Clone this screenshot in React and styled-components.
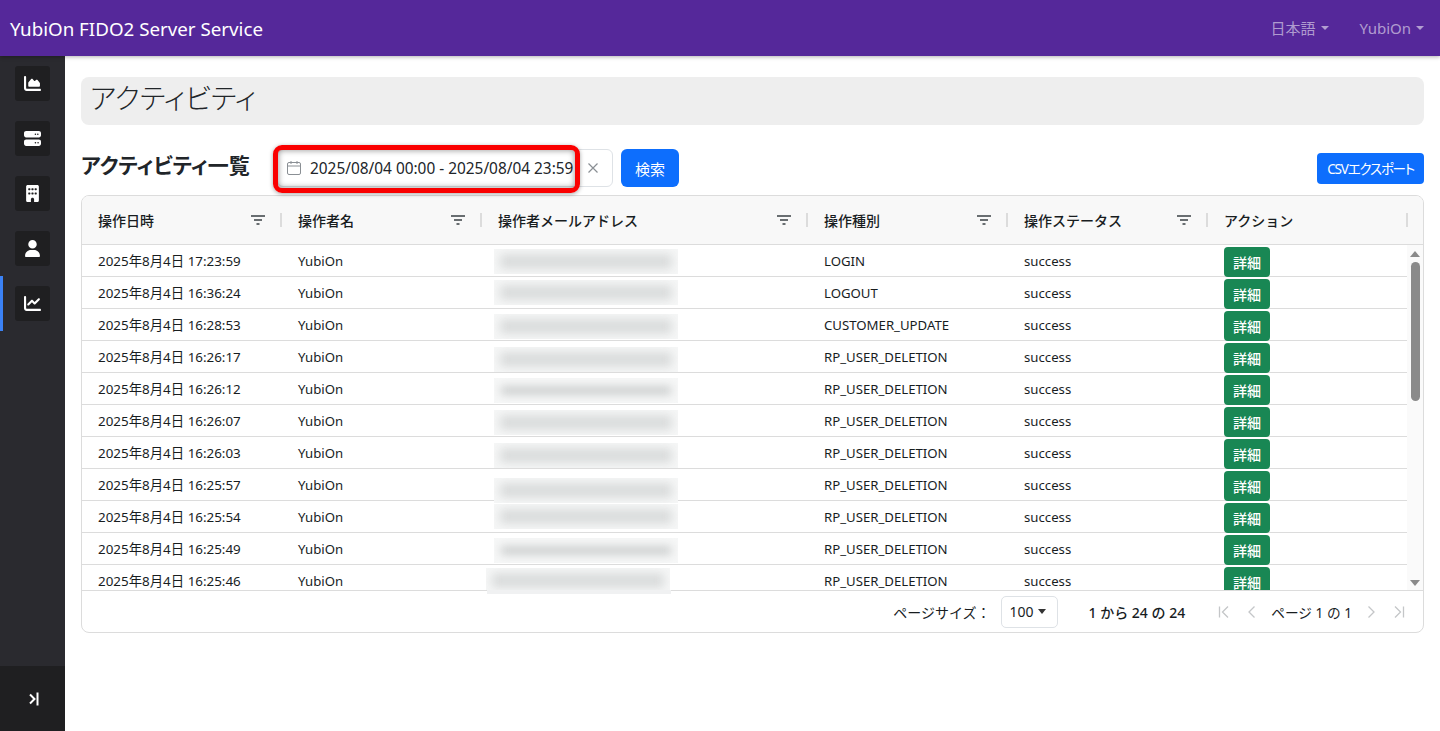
import React from "react";
import styled, { createGlobalStyle } from "styled-components";
import { FaChartArea, FaServer, FaBuilding, FaUser, FaChartLine } from "react-icons/fa6";

const GlobalStyle = createGlobalStyle`
  html, body {
    margin: 0;
    height: 100%;
    overflow: hidden;
    background: #fff;
  }
  * {
    box-sizing: border-box;
  }
  body {
    font-family: "Noto Sans", "Noto Sans CJK JP", sans-serif;
    font-size: 13px;
    color: #212529;
  }
`;

const Page = styled.div`
  display: flex;
  flex-direction: column;
  height: 731px;
`;

const Navbar = styled.header`
  position: relative;
  z-index: 3;
  flex: none;
  display: flex;
  align-items: center;
  height: 56px;
  padding: 0 16px 0 10px;
  background: #55289a;
  box-shadow: 0 1px 4px rgba(0, 0, 0, 0.3);
`;

const Brand = styled.div`
  font-size: 18.75px;
  color: #fff;
`;

const NavMenu = styled.div`
  margin-left: auto;
  display: flex;
  gap: 31px;
`;

const NavItem = styled.div`
  display: flex;
  align-items: center;
  gap: 5px;
  font-size: 15px;
  line-height: 20px;
  color: rgba(255, 255, 255, 0.55);

  &::after {
    content: "";
    border-top: 4px solid currentColor;
    border-left: 4px solid transparent;
    border-right: 4px solid transparent;
  }
`;

const Layout = styled.div`
  flex: 1;
  display: flex;
  min-height: 0;
`;

const Sidebar = styled.aside`
  flex: none;
  width: 65px;
  display: flex;
  flex-direction: column;
  background: #2a2a2f;
`;

const SideItem = styled.div`
  height: 55px;
  padding: 10px 15px;
  box-shadow: ${(p) => (p.$active ? "inset 3px 0 0 #3b82f6" : "none")};
`;

const SideIcon = styled.div`
  display: flex;
  align-items: center;
  justify-content: center;
  width: 35px;
  height: 35px;
  border-radius: 3px;
  background: #1f1f21;
  color: #fff;
  font-size: 17px;
`;

const SideToggle = styled.div`
  margin-top: auto;
  height: 65px;
  display: flex;
  align-items: center;
  justify-content: center;
  padding-left: 3px;
  background: #1f1f21;
  color: #fff;
`;

const Content = styled.main`
  flex: 1;
  min-width: 0;
  padding: 21px 16px 0;
`;

const TitleBar = styled.div`
  height: 48px;
  padding: 0 9px 9px;
  display: flex;
  align-items: center;
  border-radius: 8px;
  background: #eeeeee;
  font-size: 28px;
  font-weight: 300;
  font-feature-settings: "palt";
`;

const Toolbar = styled.div`
  display: flex;
  align-items: center;
  margin: 24px 0 8px;
`;

const Heading = styled.h2`
  width: 196px;
  margin: 0;
  padding-bottom: 8px;
  font-size: 21px;
  font-weight: 700;
  font-feature-settings: "palt";
`;

const DatePicker = styled.div`
  position: relative;
  display: flex;
  align-items: center;
  width: 336px;
  height: 38px;
  padding: 0 8px;
  border: 1px solid #dee2e6;
  border-radius: 6px;
  color: #8a8f94;
`;

const DateText = styled.span`
  margin: 0 14px 0 8px;
  font-size: 15.4px;
  color: #212529;
  white-space: nowrap;
`;

const Highlight = styled.div`
  position: absolute;
  left: -5px;
  top: -5px;
  width: 307px;
  height: 48px;
  border: 5px solid #fa0000;
  border-radius: 9px;
  box-shadow: inset 0 0 6px rgba(0, 0, 0, 0.45), 0 1px 4px rgba(0, 0, 0, 0.35);
  pointer-events: none;
`;

const Button = styled.button`
  height: ${(p) => (p.$small ? "31px" : "38px")};
  padding: ${(p) => (p.$small ? "0 10px" : "0 14px")};
  margin-left: ${(p) => (p.$push ? "auto" : "8px")};
  border: none;
  border-radius: ${(p) => (p.$small ? "4px" : "6px")};
  background: #0d6efd;
  color: #fff;
  font: inherit;
  font-size: ${(p) => (p.$small ? "13.5px" : "15px")};
  font-feature-settings: ${(p) => (p.$small ? '"palt"' : "normal")};
  letter-spacing: ${(p) => (p.$small ? "-1.2px" : "normal")};
  white-space: nowrap;
`;

const Table = styled.section`
  height: 438px;
  display: flex;
  flex-direction: column;
  border: 1px solid #dcdcdc;
  border-radius: 8px;
  overflow: hidden;
`;

const HeaderRow = styled.div`
  flex: none;
  display: grid;
  grid-template-columns: 200px 200px 326px 200px 200px 200px 16px;
  height: 49px;
  background: #f8f8f8;
  border-bottom: 1px solid #dcdcdc;
`;

const HeaderCell = styled.div`
  position: relative;
  display: flex;
  align-items: center;
  justify-content: space-between;
  padding: 0 16px;
  font-size: 14px;
  font-weight: 500;
  color: #181d1f;

  &::after {
    content: "";
    position: absolute;
    right: 0;
    top: 17px;
    width: 2px;
    height: 14px;
    background: #dcdcdc;
  }
`;

const BodyWrap = styled.div`
  flex: none;
  display: flex;
  height: 345px;
`;

const Viewport = styled.div`
  width: 1326px;
  overflow: hidden;
`;

const Row = styled.div`
  display: grid;
  grid-template-columns: 200px 200px 326px 200px 200px 200px;
  height: 32px;
  border-bottom: 1px solid #dcdcdc;
`;

const Cell = styled.div`
  position: relative;
  display: flex;
  align-items: center;
  padding: 0 16px ${(p) => (p.$date ? "2px" : "0")};
  font-size: ${(p) => (p.$date ? "13.4px" : "13.2px")};
  color: #181d1f;
  white-space: nowrap;
`;

const BlurPatch = styled.div`
  position: absolute;
  z-index: 1;
  left: ${(p) => p.$left}px;
  top: ${(p) => p.$top}px;
  width: 184px;
  height: 25px;
  overflow: hidden;
  background: #f6f7f7;

  &::before {
    content: "";
    position: absolute;
    inset: ${(p) => (p.$sharp ? "8px 7px" : "5px 6px")};
    background: ${(p) => (p.$sharp ? "#ced0d0" : "#dadcdc")};
    filter: blur(${(p) => (p.$sharp ? "4px" : "5px")});
  }
`;

const DetailButton = styled.button`
  position: relative;
  z-index: 2;
  align-self: flex-start;
  width: 46px;
  height: 30px;
  margin-top: 2px;
  padding: 0;
  border: none;
  border-radius: 4px;
  background: #198754;
  color: #fff;
  font: inherit;
  font-size: 14px;
  font-weight: 500;
`;

const ScrollTrack = styled.div`
  flex: none;
  width: 16px;
  display: flex;
  flex-direction: column;
  align-items: center;
  padding: 6px 0 4px;
  background: #fafafa;
  color: #8a8a8a;
`;

const ScrollThumb = styled.div`
  width: 9px;
  height: 139px;
  margin-top: 5px;
  border-radius: 5px;
  background: #8a8a8a;
`;

const ScrollArrow = styled.div`
  width: 0;
  border-left: 5px solid transparent;
  border-right: 5px solid transparent;
  ${(p) =>
    p.$down
      ? "border-top: 6px solid currentColor; margin-top: auto;"
      : "border-bottom: 6px solid currentColor;"}
`;

const Footer = styled.div`
  position: relative;
  flex: 1;
  display: flex;
  align-items: center;
  justify-content: flex-end;
  padding-right: 10px;
  border-top: 1px solid #dcdcdc;
  font-size: 14px;
  color: #181d1f;
`;

const FooterPatch = styled.div`
  position: absolute;
  left: 405px;
  top: -1px;
  width: 184px;
  height: 4px;
  background: #f0f1f2;
`;

const SizeSelect = styled.div`
  display: flex;
  align-items: center;
  gap: 4px;
  width: 57px;
  height: 32px;
  margin: 0 31px 0 10px;
  padding: 0 8px;
  border: 1px solid #dee2e6;
  border-radius: 5px;

  &::after {
    content: "";
    border-top: 5px solid #333;
    border-left: 4px solid transparent;
    border-right: 4px solid transparent;
  }
`;

const PageCount = styled.span`
  margin-right: 25px;
  font-weight: 500;
`;

const PageNav = styled.div`
  display: flex;
  align-items: center;
  color: #c4c6c8;
`;

const PageLabel = styled.span`
  margin: 0 5px;
  font-size: 13.7px;
  color: #181d1f;
`;

const NavGlyph = styled.svg`
  display: block;
  width: 14px;
  height: 14px;
  margin: 0 7px;
`;

const FilterIcon = () => (
  <svg width="16" height="14" viewBox="0 0 16 14" fill="none" stroke="#3a4044" strokeWidth="1.6">
    <path d="M1 3h14M4 7h8M6.5 11h3" />
  </svg>
);

const CalendarIcon = () => (
  <svg width="16" height="16" viewBox="0 0 16 16" fill="none" stroke="currentColor" strokeWidth="1">
    <rect x="1.5" y="2.5" width="13" height="12" rx="1.5" />
    <path d="M1.5 6h13M5 1v3M11 1v3" />
  </svg>
);

const ClearIcon = () => (
  <svg width="12" height="12" viewBox="0 0 12 12" fill="none" stroke="currentColor" strokeWidth="1.2">
    <path d="M1.5 1.5l9 9M10.5 1.5l-9 9" />
  </svg>
);

const ChevronEnd = () => (
  <svg width="10" height="14" viewBox="0 0 10 14" fill="none" stroke="currentColor" strokeWidth="2">
    <path d="M1 2.5l4.5 4.5L1 11.5" />
    <path d="M8.5 0.5v13" />
  </svg>
);

const First = () => (
  <NavGlyph viewBox="0 0 14 14" fill="none" stroke="currentColor" strokeWidth="1.3">
    <path d="M2.5 1.5v11M11 1.5L5.5 7l5.5 5.5" />
  </NavGlyph>
);
const Prev = () => (
  <NavGlyph viewBox="0 0 14 14" fill="none" stroke="currentColor" strokeWidth="1.3">
    <path d="M9.5 1.5L4 7l5.5 5.5" />
  </NavGlyph>
);
const Next = () => (
  <NavGlyph viewBox="0 0 14 14" fill="none" stroke="currentColor" strokeWidth="1.3">
    <path d="M4.5 1.5L10 7l-5.5 5.5" />
  </NavGlyph>
);
const Last = () => (
  <NavGlyph viewBox="0 0 14 14" fill="none" stroke="currentColor" strokeWidth="1.3">
    <path d="M11.5 1.5v11M3 1.5L8.5 7 3 12.5" />
  </NavGlyph>
);

const sideItems = [
  { icon: FaChartArea },
  { icon: FaServer },
  { icon: FaBuilding },
  { icon: FaUser },
  { icon: FaChartLine, active: true },
];

const columns = [
  "操作日時",
  "操作者名",
  "操作者メールアドレス",
  "操作種別",
  "操作ステータス",
];

const rows = [
  { date: "17:23:59", type: "LOGIN", top: 4 },
  { date: "16:36:24", type: "LOGOUT", top: 3 },
  { date: "16:28:53", type: "CUSTOMER_UPDATE", top: 5 },
  { date: "16:26:17", type: "RP_USER_DELETION", top: 6 },
  { date: "16:26:12", type: "RP_USER_DELETION", top: 5, sharp: true },
  { date: "16:26:07", type: "RP_USER_DELETION", top: 5 },
  { date: "16:26:03", type: "RP_USER_DELETION", top: 6 },
  { date: "16:25:57", type: "RP_USER_DELETION", top: 9 },
  { date: "16:25:54", type: "RP_USER_DELETION", top: 3 },
  { date: "16:25:49", type: "RP_USER_DELETION", top: 5, sharp: true },
  { date: "16:25:46", type: "RP_USER_DELETION", top: 3, left: 4 },
];

export default function App() {
  return (
    <Page>
      <GlobalStyle />
      <Navbar>
        <Brand>YubiOn FIDO2 Server Service</Brand>
        <NavMenu>
          <NavItem>日本語</NavItem>
          <NavItem>YubiOn</NavItem>
        </NavMenu>
      </Navbar>
      <Layout>
        <Sidebar>
          {sideItems.map(({ icon: Icon, active }, i) => (
            <SideItem key={i} $active={active}>
              <SideIcon>
                <Icon />
              </SideIcon>
            </SideItem>
          ))}
          <SideToggle>
            <ChevronEnd />
          </SideToggle>
        </Sidebar>
        <Content>
          <TitleBar>アクティビティ</TitleBar>
          <Toolbar>
            <Heading>アクティビティ一覧</Heading>
            <DatePicker>
              <CalendarIcon />
              <DateText>2025/08/04 00:00 - 2025/08/04 23:59</DateText>
              <ClearIcon />
              <Highlight />
            </DatePicker>
            <Button>検索</Button>
            <Button $small $push>CSVエクスポート</Button>
          </Toolbar>
          <Table>
            <HeaderRow>
              {columns.map((name) => (
                <HeaderCell key={name}>
                  {name}
                  <FilterIcon />
                </HeaderCell>
              ))}
              <HeaderCell>アクション</HeaderCell>
            </HeaderRow>
            <BodyWrap>
              <Viewport>
                {rows.map((row) => (
                  <Row key={row.date}>
                    <Cell $date>2025年8月4日 {row.date}</Cell>
                    <Cell>YubiOn</Cell>
                    <Cell>
                      <BlurPatch $left={row.left ?? 12} $top={row.top} $sharp={row.sharp} />
                    </Cell>
                    <Cell>{row.type}</Cell>
                    <Cell>success</Cell>
                    <Cell>
                      <DetailButton>詳細</DetailButton>
                    </Cell>
                  </Row>
                ))}
              </Viewport>
              <ScrollTrack>
                <ScrollArrow />
                <ScrollThumb />
                <ScrollArrow $down />
              </ScrollTrack>
            </BodyWrap>
            <Footer>
              <FooterPatch />
              ページサイズ：
              <SizeSelect>100</SizeSelect>
              <PageCount>1 から 24 の 24</PageCount>
              <PageNav>
                <First />
                <Prev />
                <PageLabel>ページ 1 の 1</PageLabel>
                <Next />
                <Last />
              </PageNav>
            </Footer>
          </Table>
        </Content>
      </Layout>
    </Page>
  );
}
